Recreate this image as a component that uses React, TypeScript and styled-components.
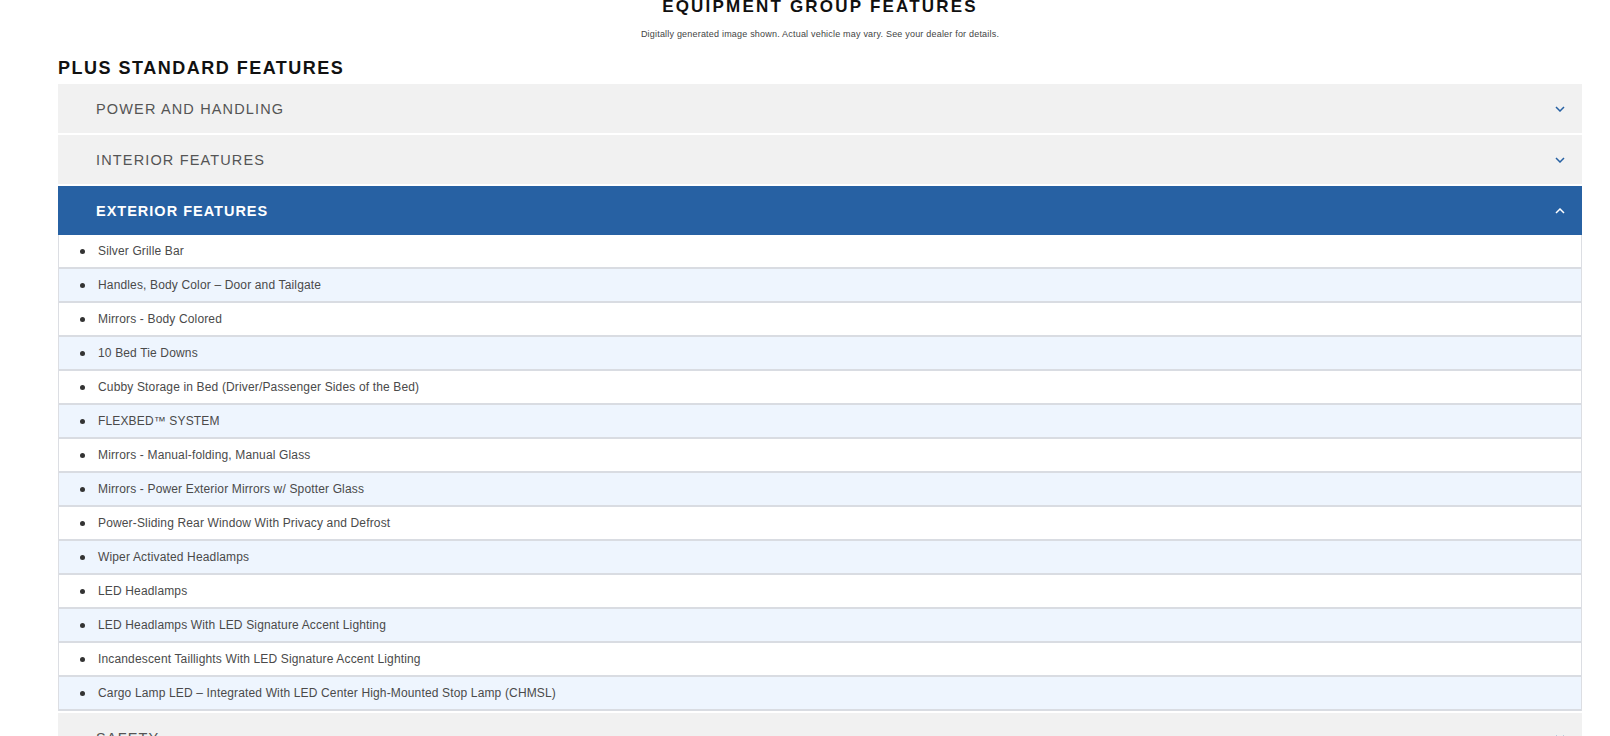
import React, { ReactElement, useState } from 'react';
import styled, { createGlobalStyle, css } from 'styled-components';

const GlobalStyle = createGlobalStyle`
  html, body {
    margin: 0;
    padding: 0;
    background: #ffffff;
    overflow: hidden;
  }
  body {
    font-family: "Liberation Sans", Arial, sans-serif;
  }
`;

const PageDiv = styled.div`
  width: 1524px;
  margin-left: 58px;
`;

const TitleH2 = styled.h2`
  margin: -4px 0 0;
  text-align: center;
  font-size: 17px;
  line-height: 22px;
  font-weight: 700;
  letter-spacing: 2.2px;
  color: #101010;
`;

const DisclaimerP = styled.p`
  margin: 10px 0 0;
  text-align: center;
  font-size: 9px;
  line-height: 12px;
  letter-spacing: 0.2px;
  color: #444;
`;

const SectionH3 = styled.h3`
  margin: 16px 0 0;
  font-size: 18px;
  line-height: 24px;
  font-weight: 700;
  letter-spacing: 1.5px;
  color: #111;
`;

const AccordionDiv = styled.div`
  margin-top: 4px;
  display: flex;
  flex-direction: column;
  gap: 2px;
`;

interface HeaderProps {
  open: boolean;
}

const HeaderButton = styled.button`
  display: flex;
  align-items: center;
  justify-content: space-between;
  width: 100%;
  height: 49px;
  padding: 0 17px 0 38px;
  border: 0;
  cursor: pointer;
  font-family: inherit;
  font-size: 14.5px;
  letter-spacing: 1.15px;
  text-align: left;
  background: #f1f1f1;
  color: #555;

  ${({ open }: HeaderProps) =>
    open &&
    css`
      background: #2761a3;
      color: #ffffff;
      font-weight: 700;
      letter-spacing: 1px;
    `}
`;

const ChevronSvg = styled.svg`
  width: 10px;
  height: 6px;
  flex: none;
`;

const ItemList = styled.ul`
  margin: 0;
  padding: 0;
  list-style: none;
  border-left: 1px solid #dcdee3;
  border-right: 1px solid #dcdee3;
`;

interface ItemProps {
  shaded: boolean;
}

const ItemLi = styled.li`
  display: flex;
  align-items: center;
  height: 32px;
  padding-left: 21px;
  border-bottom: 2px solid #d9dce2;
  font-size: 12px;
  letter-spacing: 0.15px;
  color: #4a4a4a;
  background: ${({ shaded }: ItemProps) => (shaded ? '#eef5fe' : '#ffffff')};
`;

const BulletSpan = styled.span`
  width: 5px;
  height: 5px;
  border-radius: 50%;
  background: #333;
  margin-right: 13px;
  flex: none;
`;

const Chevron: React.FC<{ up: boolean }> = ({ up }): ReactElement => (
  <ChevronSvg viewBox="0 0 10 6">
    <polyline
      points={up ? '1,5 5,1 9,5' : '1,1 5,5 9,1'}
      fill="none"
      stroke={up ? '#ffffff' : '#2761a3'}
      strokeWidth="1.5"
    />
  </ChevronSvg>
);

const sections = ['POWER AND HANDLING', 'INTERIOR FEATURES', 'EXTERIOR FEATURES', 'SAFETY'];

const exteriorItems = [
  'Silver Grille Bar',
  'Handles, Body Color – Door and Tailgate',
  'Mirrors - Body Colored',
  '10 Bed Tie Downs',
  'Cubby Storage in Bed (Driver/Passenger Sides of the Bed)',
  'FLEXBED\u2122 SYSTEM',
  'Mirrors - Manual-folding, Manual Glass',
  'Mirrors - Power Exterior Mirrors w/ Spotter Glass',
  'Power-Sliding Rear Window With Privacy and Defrost',
  'Wiper Activated Headlamps',
  'LED Headlamps',
  'LED Headlamps With LED Signature Accent Lighting',
  'Incandescent Taillights With LED Signature Accent Lighting',
  'Cargo Lamp LED – Integrated With LED Center High-Mounted Stop Lamp (CHMSL)',
];

export default function App(): ReactElement {
  const [openSection, setOpenSection] = useState<string>('EXTERIOR FEATURES');

  return (
    <PageDiv>
      <GlobalStyle />
      <TitleH2>EQUIPMENT GROUP FEATURES</TitleH2>
      <DisclaimerP>Digitally generated image shown. Actual vehicle may vary. See your dealer for details.</DisclaimerP>
      <SectionH3>PLUS STANDARD FEATURES</SectionH3>
      <AccordionDiv>
        {sections.map((name) => {
          const open = name === openSection;
          return (
            <div key={name}>
              <HeaderButton open={open} onClick={() => setOpenSection(open ? '' : name)}>
                <span>{name}</span>
                <Chevron up={open} />
              </HeaderButton>
              {open && name === 'EXTERIOR FEATURES' && (
                <ItemList>
                  {exteriorItems.map((item, i) => (
                    <ItemLi key={item} shaded={i % 2 === 1}>
                      <BulletSpan />
                      {item}
                    </ItemLi>
                  ))}
                </ItemList>
              )}
            </div>
          );
        })}
      </AccordionDiv>
    </PageDiv>
  );
}
